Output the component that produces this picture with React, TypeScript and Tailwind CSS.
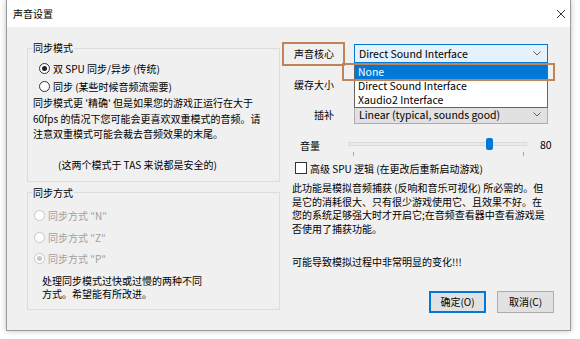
import React from 'react';

function Radio({ checked, disabled }: { checked?: boolean; disabled?: boolean }) {
  return (
    <span
      className={`flex h-[11px] w-[11px] shrink-0 items-center justify-center rounded-full border bg-white ${
        disabled ? 'border-[#c6c6c6]' : 'border-[#333]'
      }`}
    >
      {checked && (
        <span className={`h-[5px] w-[5px] rounded-full ${disabled ? 'bg-[#c6c6c6]' : 'bg-[#222]'}`} />
      )}
    </span>
  );
}

function Chevron() {
  return (
    <svg width="8" height="5" viewBox="0 0 8 5" className="shrink-0">
      <path d="M0.5 0.5 L4 4 L7.5 0.5" stroke="#606060" strokeWidth="1" fill="none" />
    </svg>
  );
}

function Select({ value, active }: { value: string; active?: boolean }) {
  return (
    <div
      className={`flex h-[19px] w-[194px] items-center justify-between border pl-[4px] pr-[6px] text-[10.5px] ${
        active ? 'border-[#0078d7] bg-[#e5f1fb]' : 'border-[#adadad] bg-[#e1e1e1]'
      }`}
    >
      <span className="whitespace-nowrap">{value}</span>
      <Chevron />
    </div>
  );
}

export default function App() {
  return (
    <div className="h-[339px] w-[580px] overflow-hidden bg-white font-['Noto_Sans_CJK_SC',sans-serif] text-[10px] text-black">
      <div className="ml-[6px] flex h-[331px] w-[565px] flex-col border border-t-0 border-[#9a9a9a] shadow-[0_0_6px_rgba(0,0,0,0.25)]">
        {/* title bar */}
        <div className="flex h-[27px] items-center justify-between bg-white pl-[6px] pr-[5px]">
          <span className="text-[10px] leading-[14px]">声音设置</span>
          <svg width="8" height="8" viewBox="0 0 8 8">
            <path d="M0 0 L8 8 M8 0 L0 8" stroke="#333" strokeWidth="1" />
          </svg>
        </div>

        {/* body */}
        <div className="flex flex-1 items-start bg-[#f0f0f0] pl-[20px] pt-[14px]">
          {/* left column */}
          <div className="flex w-[253px] flex-col">
            <fieldset className="min-w-0 border border-[#dcdcdc] px-0 pb-[8px] pt-[4px]">
              <legend className="ml-[4px] px-[1px] leading-[14px]">同步模式</legend>
              <div className="flex flex-col">
                <label className="flex h-[18px] items-center gap-[3px] pl-[11px]">
                  <Radio checked />
                  <span className="whitespace-nowrap">双 SPU 同步/异步 (传统)</span>
                </label>
                <label className="flex h-[18px] items-center gap-[3px] pl-[11px]">
                  <Radio />
                  <span className="whitespace-nowrap">同步 (某些时候音频流需要)</span>
                </label>
                <p className="pl-[5px] leading-[15.5px] whitespace-nowrap">
                  同步模式更 '精确' 但是如果您的游戏正运行在大于
                  <br />
                  60fps 的情况下您可能会更喜欢双重模式的音频。请
                  <br />
                  注意双重模式可能会裁去音频效果的末尾。
                </p>
                <p className="mt-[15.75px] pl-[30px] leading-[15.5px] whitespace-nowrap">
                  (这两个模式于 TAS 来说都是安全的)
                </p>
              </div>
            </fieldset>

            <fieldset className="mt-[4px] min-w-0 border border-[#dcdcdc] px-0 pb-[8px] pt-[5px]">
              <legend className="ml-[4px] px-[1px] leading-[14px]">同步方式</legend>
              <div className="flex flex-col text-[#a0a0a0]">
                {['同步方式 "N"', '同步方式 "Z"', '同步方式 "P"'].map((t, i) => (
                  <label key={t} className="flex h-[21.5px] items-center gap-[3px] pl-[6px]">
                    <Radio disabled checked={i === 2} />
                    <span className="whitespace-nowrap">{t}</span>
                  </label>
                ))}
              </div>
              <p className="mt-[4.5px] pl-[14px] leading-[13.5px] whitespace-nowrap">
                处理同步模式过快或过慢的两种不同
                <br />
                方式。希望能有所改进。
              </p>
            </fieldset>
          </div>

          {/* right column */}
          <div className="relative ml-[2px] mt-[3px] flex w-[273px] flex-col">
            <div className="flex h-[19px] items-center">
              <span className="w-[52px] text-right whitespace-nowrap">声音核心</span>
              <div className="ml-[20px]">
                <Select value="Direct Sound Interface" active />
              </div>
            </div>
            <div className="mt-[11.5px] flex h-[19px] items-center">
              <span className="w-[52px] text-right whitespace-nowrap">缓存大小</span>
              <div className="ml-[20px]">
                <Select value="" />
              </div>
            </div>
            <div className="mt-[11.5px] flex h-[19px] items-center">
              <span className="w-[52px] text-right whitespace-nowrap">插补</span>
              <div className="ml-[20px]">
                <Select value="Linear (typical, sounds good)" />
              </div>
            </div>

            {/* volume */}
            <div className="mt-[11px] flex h-[20px] items-center">
              <span className="ml-[18px] w-[48px] whitespace-nowrap">音量</span>
              <div className="relative h-[20px] w-[179px]">
                <div className="absolute left-0 right-0 top-[7px] h-[4px] border border-[#dadada] bg-[#e9e9e9]" />
                <div className="absolute left-[138px] top-[3px] h-[12px] w-[7px] rounded-[2px] bg-[#0078d7]" />
                <div className="absolute left-[5px] top-[17px] h-[4px] w-px bg-[#a8a8a8]" />
                <div className="absolute left-[175px] top-[17px] h-[4px] w-px bg-[#a8a8a8]" />
              </div>
              <span className="ml-[13px] text-[10.5px]">80</span>
            </div>

            {/* checkbox */}
            <label className="mt-[6px] flex h-[14px] items-center">
              <span className="ml-[13px] h-[12px] w-[12px] shrink-0 border border-[#333] bg-white" />
              <span className="ml-[3px] whitespace-nowrap">高级 SPU 逻辑 (在更改后重新启动游戏)</span>
            </label>

            <p className="ml-[10px] mt-[6.25px] leading-[13.5px] whitespace-nowrap">
              此功能是模拟音频捕获 (反响和音乐可视化) 所必需的。但
              <br />
              是它的消耗很大、只有很少游戏使用它、且效果不好。在
              <br />
              您的系统足够强大时才开启它;在音频查看器中查看游戏是
              <br />
              否使用了捕获功能。
            </p>
            <p className="ml-[10px] mt-[20px] leading-[13.5px] whitespace-nowrap">
              可能导致模拟过程中非常明显的变化!!!
            </p>

            <div className="mt-[22px] flex justify-end gap-[11px] pr-[1px]">
              <button className="flex h-[22px] w-[57px] items-center justify-center border border-[#0078d7] bg-[#e1e1e1] shadow-[inset_0_0_0_1px_#0078d7]">
                确定(O)
              </button>
              <button className="flex h-[22px] w-[57px] items-center justify-center border border-[#adadad] bg-[#e1e1e1]">
                取消(C)
              </button>
            </div>

            {/* open dropdown list */}
            <div className="absolute left-[72px] top-[20px] flex w-[194px] flex-col border border-[#646464] bg-white text-[10.5px]">
              <div className="flex h-[14px] items-center bg-[#0078d7] pl-[3px] text-white">None</div>
              <div className="flex h-[14px] items-center pl-[3px]">Direct Sound Interface</div>
              <div className="flex h-[14px] items-center pl-[3px]">Xaudio2 Interface</div>
            </div>

            {/* annotation boxes */}
            <div className="absolute left-0 top-[-2px] h-[24px] w-[63px] border-2 border-[#c08458]" />
            <div className="absolute left-[60px] top-[19px] h-[18px] w-[213px] border-2 border-[#c08458]" />
          </div>
        </div>
      </div>
    </div>
  );
}
